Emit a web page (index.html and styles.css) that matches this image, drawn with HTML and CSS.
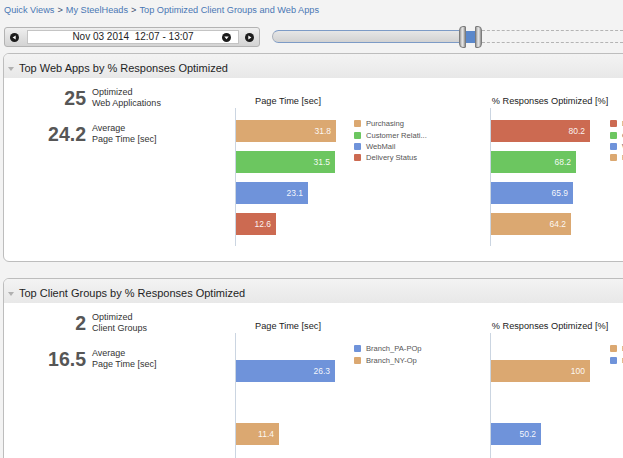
FILE: index.html
```
<!DOCTYPE html>
<html lang="en">
<head>
<meta charset="utf-8">
<title>Top Optimized Client Groups and Web Apps</title>
<link rel="stylesheet" href="styles.css">
</head>
<body>
<div class="page">
  <nav class="crumbs">
    <span class="crumb">Quick Views</span><span class="sep">&gt;</span><span class="crumb">My SteelHeads</span><span class="sep">&gt;</span><span class="crumb">Top Optimized Client Groups and Web Apps</span>
  </nav>

  <div class="toolbar">
    <div class="datebox">
      <svg class="circ" viewBox="0 0 9 9" width="9" height="9"><circle cx="4.5" cy="4.5" r="4.5" fill="#1c1c1c"/><polygon points="5.7,2.4 2.6,4.5 5.7,6.6" fill="#fff"/></svg>
      <div class="dateinput">
        <span class="datetext">Nov 03 2014&nbsp; 12:07 - 13:07</span>
        <svg class="circ" viewBox="0 0 9 9" width="9" height="9"><circle cx="4.5" cy="4.5" r="4.5" fill="#1c1c1c"/><polygon points="2.3,3.4 6.7,3.4 4.5,6.2" fill="#fff"/></svg>
      </div>
      <svg class="circ" viewBox="0 0 9 9" width="9" height="9"><circle cx="4.5" cy="4.5" r="4.5" fill="#1c1c1c"/><polygon points="3.3,2.4 6.4,4.5 3.3,6.6" fill="#fff"/></svg>
    </div>
    <div class="slider">
      <div class="track"></div>
      <div class="handle"><span class="grip grip-l"></span><span class="sel"></span><span class="grip grip-r"></span></div>
      <div class="rest"></div>
    </div>
  </div>

  <section class="panel panel-first">
    <header class="panel-head"><span class="caret"></span>Top Web Apps by % Responses Optimized</header>
    <div class="panel-body">
      <div class="stats">
        <div class="stat"><span class="num">25</span><span class="lbl">Optimized<br>Web Applications</span></div>
        <div class="stat"><span class="num">24.2</span><span class="lbl">Average<br>Page Time [sec]</span></div>
      </div>
      <div class="chart chart-a">
        <div class="plot-col">
          <div class="chart-title">Page Time [sec]</div>
          <div class="plot">
            <div class="bar c-orange" style="width:100px">31.8</div>
            <div class="bar c-green" style="width:99px">31.5</div>
            <div class="bar c-blue" style="width:72px">23.1</div>
            <div class="bar c-red" style="width:40px">12.6</div>
          </div>
        </div>
        <ul class="legend">
          <li><span class="sw c-orange"></span>Purchasing</li>
          <li><span class="sw c-green"></span>Customer Relati...</li>
          <li><span class="sw c-blue"></span>WebMail</li>
          <li><span class="sw c-red"></span>Delivery Status</li>
        </ul>
      </div>
      <div class="chart chart-b">
        <div class="plot-col">
          <div class="chart-title">% Responses Optimized [%]</div>
          <div class="plot">
            <div class="bar c-red" style="width:99px">80.2</div>
            <div class="bar c-green" style="width:85px">68.2</div>
            <div class="bar c-blue" style="width:82px">65.9</div>
            <div class="bar c-orange" style="width:80px">64.2</div>
          </div>
        </div>
        <ul class="legend">
          <li><span class="sw c-red"></span>Delivery Status</li>
          <li><span class="sw c-green"></span>Customer Relati...</li>
          <li><span class="sw c-blue"></span>WebMail</li>
          <li><span class="sw c-orange"></span>Purchasing</li>
        </ul>
      </div>
    </div>
  </section>

  <section class="panel panel-second">
    <header class="panel-head"><span class="caret"></span>Top Client Groups by % Responses Optimized</header>
    <div class="panel-body">
      <div class="stats">
        <div class="stat"><span class="num">2</span><span class="lbl">Optimized<br>Client Groups</span></div>
        <div class="stat"><span class="num">16.5</span><span class="lbl">Average<br>Page Time [sec]</span></div>
      </div>
      <div class="chart chart-a">
        <div class="plot-col">
          <div class="chart-title">Page Time [sec]</div>
          <div class="plot plot-sparse">
            <div class="bar c-blue" style="width:99px">26.3</div>
            <div class="bar c-orange" style="width:43px">11.4</div>
          </div>
        </div>
        <ul class="legend">
          <li><span class="sw c-blue"></span>Branch_PA-POp</li>
          <li><span class="sw c-orange"></span>Branch_NY-Op</li>
        </ul>
      </div>
      <div class="chart chart-b">
        <div class="plot-col">
          <div class="chart-title">% Responses Optimized [%]</div>
          <div class="plot plot-sparse">
            <div class="bar c-orange" style="width:99px">100</div>
            <div class="bar c-blue" style="width:50px">50.2</div>
          </div>
        </div>
        <ul class="legend">
          <li><span class="sw c-orange"></span>Branch_NY-Op</li>
          <li><span class="sw c-blue"></span>Branch_PA-POp</li>
        </ul>
      </div>
    </div>
  </section>
</div>
</body>
</html>
```
FILE: styles.css
```
* { box-sizing: border-box; }
html, body { margin: 0; padding: 0; }
body {
  width: 623px;
  height: 458px;
  overflow: hidden;
  background: #f3f3f3;
  font-family: "Liberation Sans", Arial, sans-serif;
  color: #222;
}
.page { padding-top: 3px; }

/* breadcrumb */
.crumbs {
  height: 14px;
  line-height: 14px;
  font-size: 9.2px;
  padding-left: 4px;
  color: #4a77b4;
  white-space: nowrap;
}
.crumbs .sep { color: #3d4f70; margin: 0 3px; }

/* toolbar */
.toolbar {
  display: flex;
  align-items: center;
  height: 20px;
  margin-top: 10px;
  padding-left: 4px;
}
.datebox {
  display: flex;
  align-items: center;
  width: 256px;
  height: 20px;
  padding: 0 5px;
  border: 1px solid #b3b3b3;
  border-radius: 3px;
  background: linear-gradient(#efefef, #d3d3d3);
}
.circ { display: block; flex: none; }
.dateinput {
  display: flex;
  align-items: center;
  width: 212px;
  height: 14px;
  margin: 0 6px 0 8px;
  padding-right: 7px;
  background: #fff;
  border: 1px solid #c4c4c4;
}
.datetext {
  flex: 1;
  text-align: center;
  padding-left: 16px;
  font-size: 10px;
  line-height: 12px;
  color: #1e1e1e;
  white-space: nowrap;
}
.slider {
  display: flex;
  align-items: center;
  flex: 1;
  height: 22px;
  margin-left: 12px;
  margin-top: -1px;
}
.track {
  width: 187px;
  height: 13px;
  border: 1px solid #7d9bc6;
  border-left-color: #a6adb8;
  border-right: none;
  border-radius: 7px 0 0 7px;
  background: linear-gradient(#e6e6e6, #d2d2d2);
}
.handle { display: flex; align-items: center; }
.grip {
  width: 7px;
  height: 22px;
  border: 1px solid #7c7c7c;
  background: linear-gradient(90deg, #9a9a9a, #e8e8e8 45%, #c4c4c4 75%, #8a8a8a);
}
.grip-l { border-radius: 4px 1px 1px 4px; }
.grip-r { border-radius: 1px 4px 4px 1px; }
.sel {
  width: 9px;
  height: 12px;
  background: #5b88cb;
}
.rest {
  flex: 1;
  height: 13px;
  border-top: 1px dashed #b4b4b4;
  border-bottom: 1px dashed #b4b4b4;
}

/* panels */
.panel {
  width: 720px;
  margin-left: 3px;
  border: 1px solid #bdbdbd;
  border-radius: 6px;
  background: #fff;
  overflow: hidden;
}
.panel-first { margin-top: 6px; }
.panel-second { margin-top: 16px; }
.panel-head {
  display: flex;
  align-items: center;
  height: 24px;
  padding: 8px 0 3px 4px;
  font-size: 11px;
  line-height: 13px;
  color: #1f1f1f;
  background: linear-gradient(#f3f3f3, #e8e8e8);
  white-space: nowrap;
}
.caret {
  width: 0;
  height: 0;
  margin-right: 5px;
  border-left: 3px solid transparent;
  border-right: 3px solid transparent;
  border-top: 4px solid #b0b0b0;
}
.panel-body { display: flex; }

/* stats */
.stats { width: 231px; flex: none; padding-top: 8px; }
.stat {
  display: flex;
  align-items: center;
  height: 24px;
}
.stat + .stat { margin-top: 12px; }
.num {
  width: 82px;
  text-align: right;
  font-size: 19.5px;
  font-weight: bold;
  line-height: 24px;
  color: #565656;
}
.lbl {
  margin-left: 6px;
  font-size: 9px;
  line-height: 11.5px;
  color: #333;
  white-space: nowrap;
}

/* charts */
.chart { display: flex; padding-top: 18px; padding-bottom: 15px; }
.chart-a { width: 255px; flex: none; }
.chart-b { flex: 1; }
.chart-a .plot-col { width: 106px; }
.chart-b .plot-col { width: 120px; }
.chart-title {
  font-size: 9.2px;
  line-height: 11px;
  text-align: center;
  white-space: nowrap;
  color: #222;
}
.plot {
  display: flex;
  flex-direction: column;
  gap: 9px;
  margin-top: 1px;
  padding: 12px 0 11px;
  border-left: 1px solid #cbd5e1;
}
.plot-sparse { padding: 27px 0 40px; gap: 41px; }
.bar {
  height: 22px;
  padding-right: 5px;
  font-size: 8.5px;
  line-height: 22px;
  text-align: right;
  color: rgba(255, 255, 255, 0.93);
}
.c-orange { background: #dba871; }
.c-green { background: #6cc660; }
.c-blue { background: #6f93da; }
.c-red { background: #cc6a51; }

.legend {
  list-style: none;
  margin: 22px 0 0 0;
  padding: 0;
}
.chart-a .legend { margin-left: 13px; }
.legend li {
  display: flex;
  align-items: center;
  height: 11.4px;
  font-size: 7.6px;
  color: #555;
  white-space: nowrap;
}
.sw {
  width: 7px;
  height: 7px;
  margin-right: 5px;
  border-radius: 1px;
  flex: none;
}
```
